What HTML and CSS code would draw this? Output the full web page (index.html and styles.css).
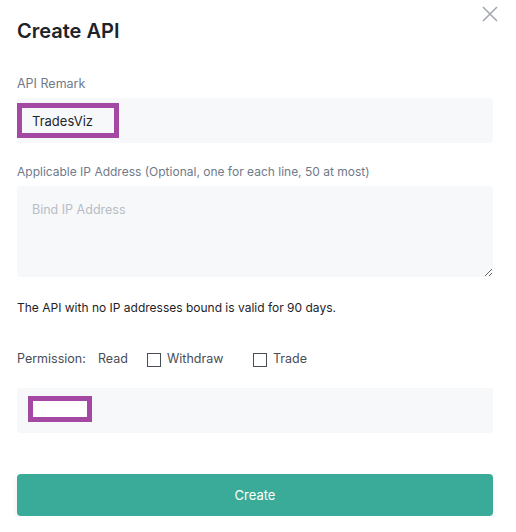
FILE: index.html
```html
<!DOCTYPE html>
<html lang="en">
<head>
    <meta charset="UTF-8">
    <meta name="viewport" content="width=device-width, initial-scale=1.0">
    <title>Create API</title>
    <link rel="stylesheet" href="styles.css">
</head>
<body>
    <div class="modal">
        <button class="close" aria-label="Close">
            <svg width="16" height="16" viewBox="0 0 16 16"><path d="M1 1L15 15M15 1L1 15" stroke="#a4a9b0" stroke-width="1.6" fill="none"/></svg>
        </button>
        <h2 class="title">Create API</h2>

        <div class="label">API Remark</div>
        <div class="field">
            <span class="mark mark-text">TradesViz</span>
        </div>

        <div class="label label-ip">Applicable IP Address (Optional, one for each line, 50 at most)</div>
        <textarea class="area" placeholder="Bind IP Address"></textarea>

        <p class="note">The API with no IP addresses bound is valid for 90 days.</p>

        <div class="perm">
            <span class="perm-label">Permission:</span>
            <span class="perm-read">Read</span>
            <label class="check"><span class="box"></span>Withdraw</label>
            <label class="check check-trade"><span class="box"></span>Trade</label>
        </div>

        <div class="field field-code">
            <span class="mark mark-blank"></span>
        </div>

        <button class="create">Create</button>
    </div>
</body>
</html>
```

FILE: styles.css
```css
body {
    margin: 0;
    font-family: Inter, "Noto Sans", sans-serif;
    background: #fff;
    color: #1e2329;
}
.modal {
    position: relative;
    padding: 0 23px 0 17px;
    width: 476px;
}
.close {
    position: absolute;
    top: 6px;
    right: 18px;
    padding: 0;
    border: 0;
    background: none;
    width: 16px;
    height: 16px;
}
.title {
    margin: 0;
    padding-top: 19px;
    font-size: 20px;
    font-weight: 600;
    line-height: 24px;
    color: #1e2329;
}
.label {
    margin-top: 33px;
    font-size: 12.5px;
    line-height: 16px;
    color: #707a8a;
}
.label-ip {
    margin-top: 21px;
    font-size: 12px;
}
.field {
    margin-top: 6px;
    height: 45px;
    background: #f7f8fa;
    border-radius: 3px;
    display: flex;
    align-items: center;
}
.mark {
    border: 5px solid #a349a4;
    box-sizing: border-box;
}
.mark-text {
    width: 102px;
    height: 35px;
    padding-left: 10px;
    display: flex;
    align-items: center;
    font-size: 13px;
    color: #1e2329;
}
.area {
    display: block;
    margin-top: 6px;
    width: 476px;
    height: 91px;
    box-sizing: border-box;
    border: 0;
    border-radius: 3px;
    background: #f7f8fa;
    padding: 16px 15px;
    font-family: inherit;
    font-size: 12.5px;
    outline: none;
}
.area::placeholder {
    color: #b7bdc6;
}
.note {
    margin: 22px 0 0;
    font-size: 12px;
    line-height: 17px;
    color: #1e2329;
}
.perm {
    margin-top: 35px;
    display: flex;
    align-items: center;
    font-size: 12.5px;
    line-height: 16px;
}
.perm-label {
    color: #474d57;
    width: 81px;
}
.perm-read {
    color: #474d57;
    width: 49px;
}
.check {
    display: flex;
    align-items: center;
    color: #474d57;
    width: 106px;
}
.box {
    width: 12px;
    height: 12px;
    border: 1px solid #474d57;
    margin-right: 6px;
    position: relative;
    top: 1px;
}
.check-trade {
    width: auto;
}
.field-code {
    margin-top: 21px;
    padding-left: 11px;
}
.mark-blank {
    width: 64px;
    height: 26px;
    background: #fff;
    position: relative;
    top: -2px;
}
.create {
    display: block;
    margin-top: 41px;
    width: 476px;
    height: 42px;
    border: 0;
    border-radius: 4px;
    background: #3aab98;
    color: #fff;
    font-family: inherit;
    font-size: 13px;
    box-shadow: 0 3px 6px rgba(0, 0, 0, 0.08);
}
```
